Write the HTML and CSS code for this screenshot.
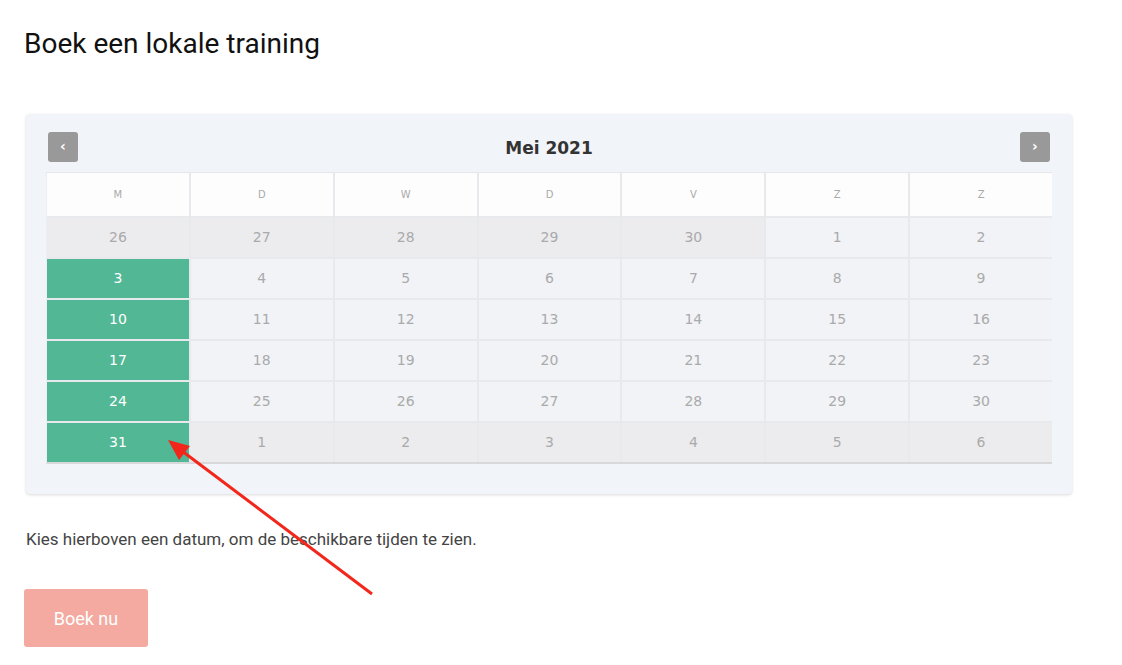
FILE: index.html
```html
<!DOCTYPE html>
<html lang="nl">

<head>
  <meta charset="UTF-8">
  <meta name="viewport" content="width=device-width, initial-scale=1.0">
  <title>Boek een lokale training</title>
  <link rel="stylesheet" href="styles.css">
</head>

<body>
  <div class="page">
    <h1 class="title">Boek een lokale training</h1>

    <div class="calendar">
      <div class="cal-nav">
        <span class="nav-btn">&lsaquo;</span>
        <span class="cal-month">Mei 2021</span>
        <span class="nav-btn">&rsaquo;</span>
      </div>
      <div class="cal-grid">
        <div class="head">M</div>
        <div class="head">D</div>
        <div class="head">W</div>
        <div class="head">D</div>
        <div class="head">V</div>
        <div class="head">Z</div>
        <div class="head">Z</div>

        <div class="day other">26</div>
        <div class="day other">27</div>
        <div class="day other">28</div>
        <div class="day other">29</div>
        <div class="day other">30</div>
        <div class="day">1</div>
        <div class="day">2</div>

        <div class="day open">3</div>
        <div class="day">4</div>
        <div class="day">5</div>
        <div class="day">6</div>
        <div class="day">7</div>
        <div class="day">8</div>
        <div class="day">9</div>

        <div class="day open">10</div>
        <div class="day">11</div>
        <div class="day">12</div>
        <div class="day">13</div>
        <div class="day">14</div>
        <div class="day">15</div>
        <div class="day">16</div>

        <div class="day open">17</div>
        <div class="day">18</div>
        <div class="day">19</div>
        <div class="day">20</div>
        <div class="day">21</div>
        <div class="day">22</div>
        <div class="day">23</div>

        <div class="day open">24</div>
        <div class="day">25</div>
        <div class="day">26</div>
        <div class="day">27</div>
        <div class="day">28</div>
        <div class="day">29</div>
        <div class="day">30</div>

        <div class="day open">31</div>
        <div class="day other">1</div>
        <div class="day other">2</div>
        <div class="day other">3</div>
        <div class="day other">4</div>
        <div class="day other">5</div>
        <div class="day other">6</div>
      </div>
    </div>

    <p class="hint">Kies hierboven een datum, om de beschikbare tijden te zien.</p>

    <button class="book-btn">Boek nu</button>
  </div>

  <!-- annotatie-pijl -->
  <svg class="arrow-note" width="1122" height="665" viewBox="0 0 1122 665">
    <line x1="372" y1="594" x2="182" y2="451" stroke="#f2261a" stroke-width="3" />
    <polygon points="168,440 190,446 179,460" fill="#f2261a" />
  </svg>
</body>

</html>
```

FILE: styles.css
```css
body,
h1,
p {
  margin: 0;
  padding: 0;
}
body {
  font-family: Roboto, "Liberation Sans", sans-serif;
  background: #fff;
  position: relative;
}
.page {
  padding: 28px 50px 0 24px;
  width: 1048px;
}
.title {
  font-size: 28px;
  font-weight: 400;
  color: #111;
  line-height: 32px;
  margin-bottom: 54px;
}
.calendar {
  margin-left: 2px;
  width: 1006px;
  padding: 18px 20px 30px;
  background: #f1f4f8;
  border-radius: 4px;
  box-shadow: 0 1px 3px rgba(0, 0, 0, .15);
}
.cal-nav {
  display: flex;
  justify-content: space-between;
  align-items: center;
  padding: 0 2px;
  margin-bottom: 10px;
}
.nav-btn {
  width: 30px;
  height: 30px;
  line-height: 28px;
  text-align: center;
  background: #999;
  color: #fff;
  border-radius: 3px;
  font-family: "DejaVu Sans", sans-serif;
  font-size: 14px;
  font-weight: bold;
}
.cal-month {
  font-family: "DejaVu Sans", Verdana, sans-serif;
  font-size: 17px;
  font-weight: bold;
  color: #333;
  margin-top: 2px;
}
.cal-grid {
  display: grid;
  grid-template-columns: repeat(7, 1fr);
  gap: 2px;
  background: #e8e9ed;
  border-top: 1px solid #e6e7ea;
  border-left: 1px solid #eceef2;
  border-bottom: 2px solid #d8d8db;
  font-family: "DejaVu Sans", Verdana, sans-serif;
}
.head {
  height: 43px;
  line-height: 43px;
  text-align: center;
  background: #fdfdfd;
  font-size: 10px;
  color: #aaa;
}
.day {
  height: 39px;
  line-height: 39px;
  text-align: center;
  background: #f2f3f7;
  font-size: 14px;
  color: #aaa;
}
.day.other {
  background: #ececee;
}
.day.open {
  background: #52b794;
  color: #fff;
}
.hint {
  margin-top: 35px;
  margin-left: 2px;
  font-size: 17px;
  color: #444;
  line-height: 20px;
}
.book-btn {
  margin-top: 40px;
  width: 124px;
  height: 58px;
  border: none;
  border-radius: 3px;
  background: #f4aaa0;
  color: #fff;
  font-family: Roboto, "Liberation Sans", sans-serif;
  font-size: 18px;
}
.arrow-note {
  position: absolute;
  top: 0;
  left: 0;
  pointer-events: none;
}
```
